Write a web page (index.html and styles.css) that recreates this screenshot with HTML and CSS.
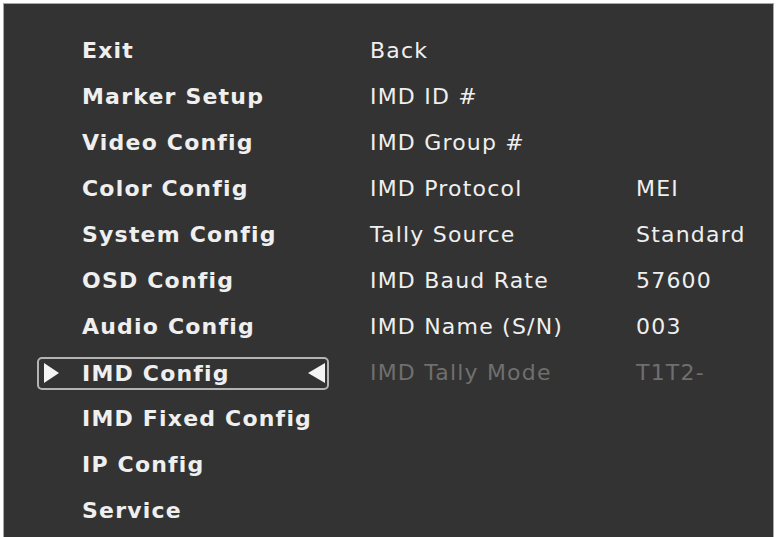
FILE: index.html
```html
<!DOCTYPE html>
<html>
<head>
<meta charset="utf-8">
<link rel="stylesheet" href="styles.css">
</head>
<body>
<div class="top-gap"></div>
<div class="screen">
  <div class="menu">
    <div class="item">Exit</div><div class="label">Back</div><div class="value"></div>
    <div class="item">Marker Setup</div><div class="label">IMD ID #</div><div class="value"></div>
    <div class="item">Video Config</div><div class="label">IMD Group #</div><div class="value"></div>
    <div class="item">Color Config</div><div class="label">IMD Protocol</div><div class="value">MEI</div>
    <div class="item">System Config</div><div class="label">Tally Source</div><div class="value">Standard</div>
    <div class="item">OSD Config</div><div class="label">IMD Baud Rate</div><div class="value">57600</div>
    <div class="item">Audio Config</div><div class="label">IMD Name (S/N)</div><div class="value">003</div>
    <div class="item selected">
      <svg class="tri" width="15" height="20" viewBox="0 0 15 20"><polygon points="0,0 15,10 0,20" fill="#f4f4f4"/></svg>
      <span class="sel-text">IMD Config</span>
      <svg class="tri tri-right" width="17" height="20" viewBox="0 0 17 20"><polygon points="17,0 0,10 17,20" fill="#f4f4f4"/></svg>
    </div><div class="label disabled">IMD Tally Mode</div><div class="value disabled">T1T2-</div>
    <div class="item">IMD Fixed Config</div><div class="label"></div><div class="value"></div>
    <div class="item">IP Config</div><div class="label"></div><div class="value"></div>
    <div class="item">Service</div><div class="label"></div><div class="value"></div>
  </div>
</div>
</body>
</html>
```

FILE: styles.css
```css
html, body {
  margin: 0;
  padding: 0;
  background: #ffffff;
  overflow: hidden;
}
body {
  width: 776px;
  height: 537px;
}
.top-gap {
  height: 3px;
}
.screen {
  margin-left: 3px;
  width: 771px;
  height: 540px;
  background: #333333;
  border: 1px solid #a8a8a8;
  border-bottom: none;
  box-sizing: border-box;
}
.menu {
  display: grid;
  grid-template-columns: 292px 225px 1fr;
  grid-auto-rows: 46px;
  column-gap: 41px;
  padding-top: 24px;
  padding-left: 33px;
  font-family: "DejaVu Sans", "Verdana", sans-serif;
  font-size: 22px;
  color: #efefef;
}
.item {
  font-weight: bold;
  letter-spacing: 1.2px;
  line-height: 46px;
  padding-left: 45px;
  white-space: nowrap;
}
.label, .value {
  letter-spacing: 1.2px;
  line-height: 46px;
  white-space: nowrap;
}
.disabled {
  color: #6f6f6f;
}
.item.selected {
  align-self: center;
  height: 33px;
  box-sizing: border-box;
  border: 2px solid #b4b4b4;
  border-radius: 5px;
  padding-left: 5px;
  padding-right: 2px;
  display: flex;
  align-items: center;
  line-height: 29px;
}
.tri {
  display: block;
  flex: none;
}
.sel-text {
  margin-left: 23px;
}
.tri-right {
  margin-left: auto;
}
```
